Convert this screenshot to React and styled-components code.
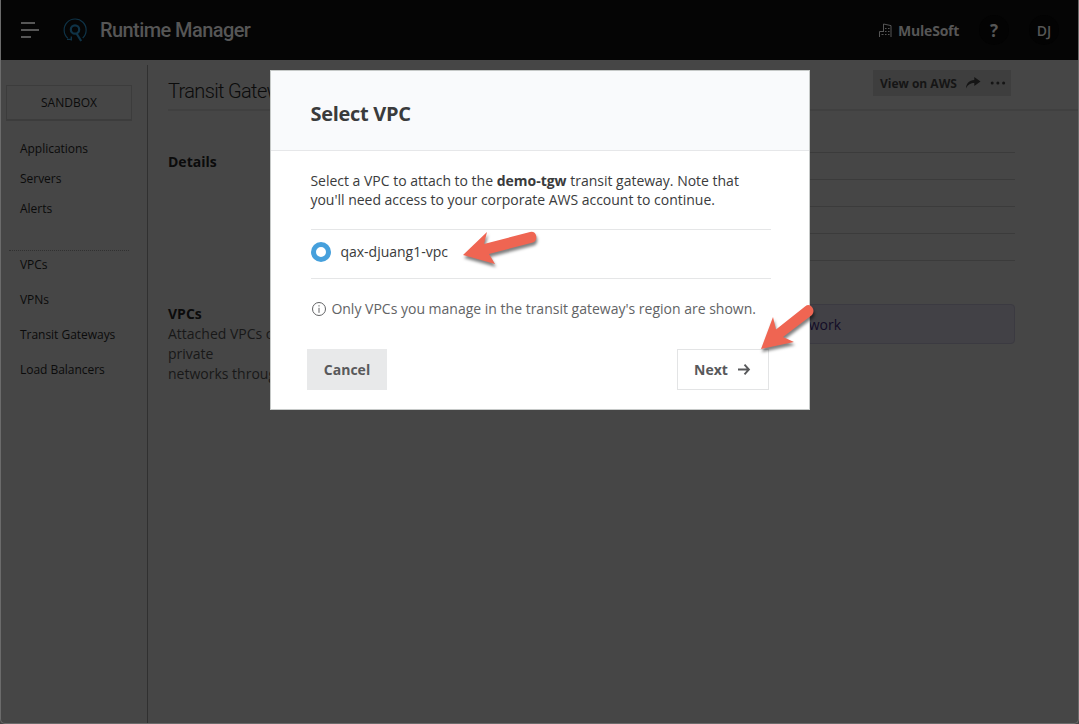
import React from 'react';
import styled, { createGlobalStyle } from 'styled-components';

const Global = createGlobalStyle`
  * { box-sizing: border-box; }
  html, body { margin: 0; height: 100%; overflow: hidden; background: #464646; }
  body { font-family: 'Open Sans', 'Noto Sans', sans-serif; color: #0b0b0b; }
`;

const Page = styled.div`
  position: relative;
  width: 1079px;
  height: 724px;
  display: flex;
  flex-direction: column;
  background: #464646;
  border: 1px solid #6b6b6b;
  border-top: 0;
  border-radius: 0 0 5px 5px;
`;

const Header = styled.header`
  height: 60px;
  flex: none;
  display: flex;
  align-items: center;
  padding-left: 20px;
  background: #050505;
  color: #565656;
`;

const Logo = styled.svg`
  margin-left: 24px;
`;

const AppName = styled.h1`
  margin: 0 auto 0 13px;
  font: 500 20px/62px Roboto, sans-serif;
  letter-spacing: -0.58px;
  white-space: nowrap;
`;

const HeaderLabel = styled.span`
  width: 61px;
  margin-left: 6px;
  font-size: 14px;
  font-weight: 700;
  line-height: 20px;
  letter-spacing: -0.2px;
  padding-top: 2px;
  white-space: nowrap;
`;

const Round = styled.span`
  width: 30px;
  height: 30px;
  margin-left: 20px;
  border-radius: 50%;
  background: #030303;
  font-size: ${(p) => p.$size};
  font-weight: ${(p) => p.$weight};
  line-height: 31px;
  text-align: center;

  &:last-child {
    margin-right: 19px;
  }
`;

const Body = styled.div`
  flex: 1;
  display: flex;
  padding-top: 5px;
`;

const Sidebar = styled.nav`
  width: 147px;
  flex: none;
  border-right: 1px solid #303030;
  padding: 20px 0 0 5px;
  font-size: 12px;
`;

const Environment = styled.div`
  width: 126px;
  height: 36px;
  border: 1px solid #3c3c3c;
  border-bottom-width: 2px;
  line-height: 34px;
  text-align: center;
`;

const NavList = styled.ul`
  list-style: none;
  margin: ${(p) => p.$top} 0 0;
  padding: 0 0 0 14px;
`;

const NavItem = styled.li`
  height: ${(p) => p.$height};
  line-height: ${(p) => p.$height};
  letter-spacing: -0.03px;
`;

const Divider = styled.div`
  width: 120px;
  margin: 26px 0 0 3px;
  border-top: 1px dotted #303030;
`;

const Main = styled.main`
  flex: 1;
  padding-left: 20px;
`;

const TitleBar = styled.div`
  height: 46px;
  display: flex;
  justify-content: space-between;
  border-bottom: 2px solid #404040;
  padding-right: 67px;
`;

const PageTitle = styled.h2`
  margin: 0;
  font: 300 20px/53px Roboto, sans-serif;
  letter-spacing: -0.65px;
`;

const AwsButton = styled.div`
  display: flex;
  align-items: center;
  gap: 9px;
  width: 138px;
  height: 26px;
  margin-top: 5px;
  padding-left: 7px;
  background: #3e3e3e;
  color: #151515;
  font-size: 12px;
  font-weight: 700;
`;

const Section = styled.section`
  display: grid;
  grid-template-columns: 210px 1fr;
  width: 847px;
  height: ${(p) => p.$height};
  padding-top: ${(p) => p.$top};
`;

const SectionTitle = styled.h3`
  margin: ${(p) => p.$top || 0} 0 0;
  font-size: 14px;
  font-weight: 700;
  line-height: 20px;
`;

const SectionText = styled.p`
  margin: 0;
  font-size: 14px;
  line-height: 20px;
  color: #181818;
  white-space: nowrap;
`;

const DetailRow = styled.div`
  height: 27px;
  border-bottom: 1px solid #3b3b3b;
`;

const Notice = styled.div`
  height: 40px;
  padding-right: 173px;
  border: 1px solid #3b3a41;
  border-radius: 4px;
  background: #424146;
  color: #120c26;
  font-size: 14px;
  line-height: 39px;
  text-align: right;
`;

const Dialog = styled.div`
  position: absolute;
  left: 269px;
  top: 70px;
  width: 540px;
  height: 340px;
  background: #fff;
  border: 1px solid #c6c9c8;
  color: #3a3b3c;
  font-size: 14px;
`;

const DialogHeader = styled.div`
  height: 80px;
  padding-left: 39.5px;
  background: #f9fafc;
  border-bottom: 1px solid #e6e7e9;
  font-size: 20px;
  font-weight: 700;
  line-height: 86px;
  letter-spacing: -0.3px;
`;

const DialogBody = styled.div`
  padding: 20px 38px 0 40px;
`;

const Intro = styled.p`
  margin: 0 0 20px -0.6px;
  line-height: 19px;
  letter-spacing: -0.01px;
  white-space: nowrap;
`;

const Option = styled.label`
  display: flex;
  align-items: center;
  height: 50px;
  gap: 9.4px;
  border-top: 1px solid #e5e6e7;
  border-bottom: 1px solid #e5e6e7;
  padding-bottom: 5px;
`;

const Radio = styled.span`
  width: 20px;
  height: 20px;
  border: 5.5px solid #46a0dc;
  border-radius: 50%;
`;

const Hint = styled.div`
  display: flex;
  align-items: center;
  gap: 5px;
  margin-top: 20px;
  padding-left: 0.4px;
  line-height: 20px;
  color: #626365;
  white-space: nowrap;
`;

const Actions = styled.div`
  display: flex;
  justify-content: space-between;
  margin: 30px 2px 0 -4px;
`;

const Button = styled.button`
  display: flex;
  align-items: center;
  justify-content: center;
  gap: 10px;
  width: ${(p) => (p.$outlined ? '92px' : '80px')};
  height: 41px;
  padding: 0 ${(p) => (p.$outlined ? '1px' : '0')} 0 0;
  border: ${(p) => (p.$outlined ? '1px solid #e3e4e5' : '0')};
  background: ${(p) => (p.$outlined ? '#fff' : '#e8e9ea')};
  color: #58595b;
  font: 700 14px 'Open Sans', sans-serif;
`;

const Pointers = styled.svg`
  position: absolute;
  left: -1px;
  top: 0;
  pointer-events: none;
  filter: drop-shadow(1px 3px 1.5px rgba(0, 0, 0, 0.5));
`;

const MenuIcon = () => (
  <svg width="18" height="18" viewBox="0 0 18 18" stroke="#565656" strokeWidth="1.8" fill="none">
    <path d="M0 2h14M0 9h18M0 16h10" />
  </svg>
);

const LogoIcon = () => (
  <Logo width="24" height="24" viewBox="0 0 24 24" fill="none" stroke="#0f3347">
    <path d="M4.8 20.2A11 11 0 1 1 19.7 20" strokeWidth="1.2" />
    <path d="M8.3 22.6v-4M4 21.4H8.3" strokeWidth="1.4" />
    <circle cx="12" cy="11.5" r="4.2" strokeWidth="2.2" />
    <path d="M13.5 15.5l4.7 7.5" strokeWidth="2.2" />
  </Logo>
);

const BuildingIcon = () => (
  <svg width="13" height="15" viewBox="0 0 13 15" fill="none" stroke="#565656">
    <path d="M.5 14V8.5H4.5M4.5 9V1l7.5 1.6V14" />
    <path d="M6 5.5h1.5M9 5.5h1.5M6 8.5h1.5M9 8.5h1.5M2.5 11.5h2M6 11.5h1.5M9 11.5h1.5" strokeWidth="1.2" />
  </svg>
);

const ShareIcon = () => (
  <svg width="15" height="12" viewBox="0 0 15 12" fill="#151515">
    <path d="M0 11.5C0 6.8 3.3 3.3 8.3 3.1V0L14.5 4.5 8.3 9V6.1C4.7 6.1 2 7.5 0 11.5z" />
  </svg>
);

const DotsIcon = () => (
  <svg width="16" height="4" viewBox="0 0 16 4" fill="#151515">
    <circle cx="2.2" cy="2" r="1.5" />
    <circle cx="7.9" cy="2" r="1.5" />
    <circle cx="13.6" cy="2" r="1.5" />
  </svg>
);

const InfoIcon = () => (
  <svg width="15" height="15" viewBox="0 0 15 15" fill="none" stroke="#626365">
    <circle cx="8" cy="7" r="6.5" />
    <path d="M8 5.8V10.8M8 3.2v1.3" />
  </svg>
);

const NextIcon = () => (
  <svg width="13" height="12" viewBox="0 0 13 12" fill="none" stroke="#58595b" strokeWidth="1.9">
    <path d="M-.5 5.5h11.5M6.5 .7 10.9 5.5l-4.4 4.8" />
  </svg>
);

export default function App() {
  return (
    <>
      <Global />
      <Page>
        <Header>
          <MenuIcon />
          <LogoIcon />
          <AppName>Runtime Manager</AppName>
          <BuildingIcon />
          <HeaderLabel>MuleSoft</HeaderLabel>
          <Round $size="17px" $weight="700">?</Round>
          <Round $size="14px" $weight="600">DJ</Round>
        </Header>
        <Body>
          <Sidebar>
            <Environment>SANDBOX</Environment>
            <NavList $top="13px">
              {['Applications', 'Servers', 'Alerts'].map((name) => (
                <NavItem key={name} $height="30px">{name}</NavItem>
              ))}
            </NavList>
            <Divider />
            <NavList $top="-4px">
              {['VPCs', 'VPNs', 'Transit Gateways', 'Load Balancers'].map((name) => (
                <NavItem key={name} $height="35px">{name}</NavItem>
              ))}
            </NavList>
          </Sidebar>
          <Main>
            <TitleBar>
              <PageTitle>Transit Gateways</PageTitle>
              <AwsButton>
                View on AWS
                <ShareIcon />
                <DotsIcon />
              </AwsButton>
            </TitleBar>
            <Section $height="152px" $top="15px">
              <SectionTitle $top="26px">Details</SectionTitle>
              <div>
                {[0, 1, 2, 3, 4].map((row) => <DetailRow key={row} />)}
              </div>
            </Section>
            <Section $height="90px" $top="41px">
              <div>
                <SectionTitle>VPCs</SectionTitle>
                <SectionText>Attached VPCs can access</SectionText>
                <SectionText>private</SectionText>
                <SectionText>networks through</SectionText>
              </div>
              <Notice>work</Notice>
            </Section>
          </Main>
        </Body>
        <Dialog>
          <DialogHeader>Select VPC</DialogHeader>
          <DialogBody>
            <Intro>
              Select a VPC to attach to the <b>demo-tgw</b> transit gateway. Note that
              <br />
              you'll need access to your corporate AWS account to continue.
            </Intro>
            <Option>
              <Radio />
              qax-djuang1-vpc
            </Option>
            <Hint>
              <InfoIcon />
              Only VPCs you manage in the transit gateway's region are shown.
            </Hint>
            <Actions>
              <Button>Cancel</Button>
              <Button $outlined>
                Next
                <NextIcon />
              </Button>
            </Actions>
          </DialogBody>
        </Dialog>
        <Pointers width="1079" height="724" viewBox="0 0 1079 724" fill="#ef6552">
          <path d="M463 255L487 232L484 244L530 232Q535 231 536.2 236Q537 241 533 242.5L489 254L495 264Z" />
          <path d="M761 349L773 317L776 329.5L805 306.5Q809 303.5 812 307Q815 311 812 315L783 337L794 342Z" />
        </Pointers>
      </Page>
    </>
  );
}
